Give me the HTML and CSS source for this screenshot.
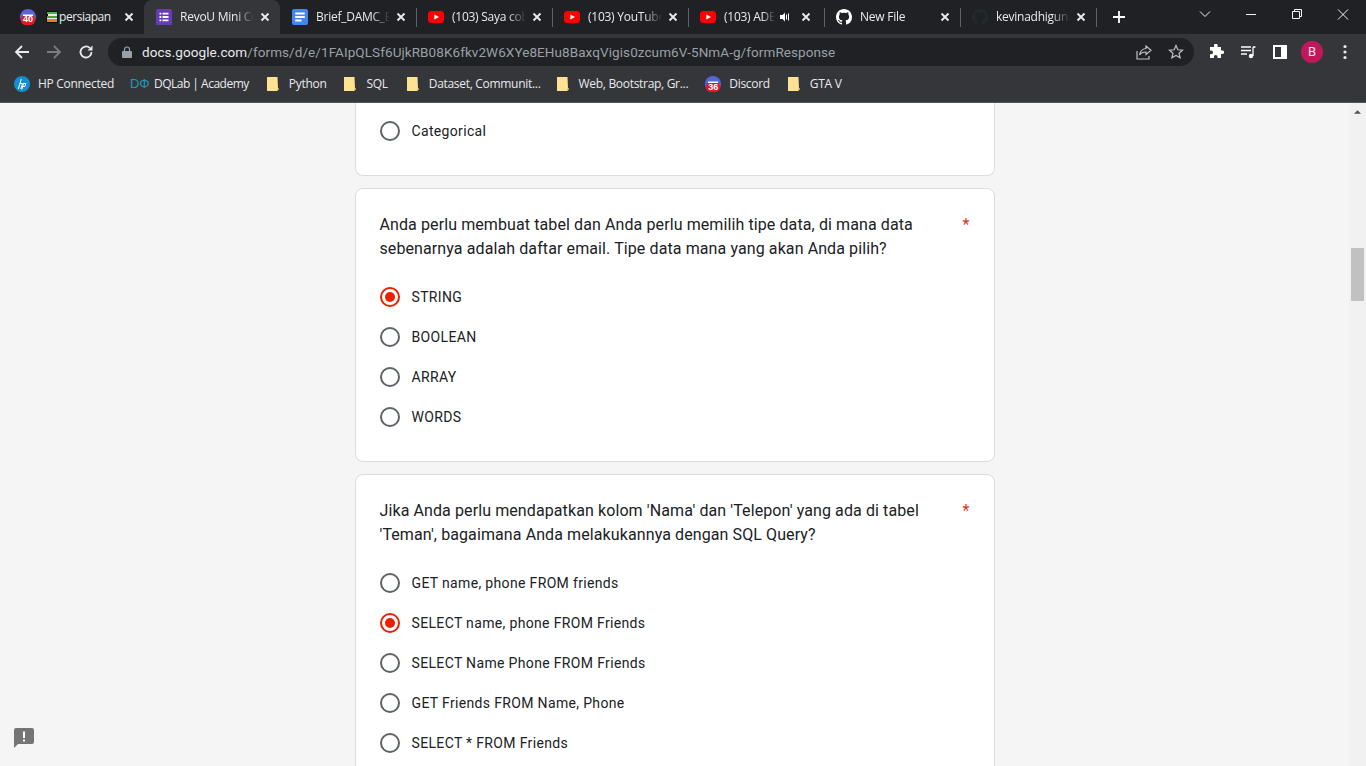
FILE: index.html
```html
<!DOCTYPE html>
<html lang="id">
<head>
<meta charset="utf-8">
<title>RevoU Mini Course</title>
<link rel="stylesheet" href="styles.css">
</head>
<body>
<header class="chrome">
  <div class="tabstrip">
    <div class="tab">
      <svg class="fav badge-fav" viewBox="0 0 16 16"><circle cx="8" cy="8" r="8" fill="#5865d8"/><rect x="1" y="6" width="14" height="10" rx="4.500" fill="#e01b24"/><rect x="3" y="5.500" width="10" height="1.500" fill="#fff"/></svg>
      <span class="fav-num">40</span>
      <svg class="fav2" viewBox="0 0 12 12"><rect width="12" height="12" fill="#111"/><rect x="1" y="1" width="10" height="2" fill="#4caf50"/><rect x="2" y="3" width="9" height="2" fill="#e8e8e8"/><rect x="1" y="5" width="10" height="2" fill="#43a047"/><rect x="1" y="7" width="10" height="1" fill="#e8e8e8"/><rect x="1" y="8" width="10" height="3" fill="#e67e22"/></svg>
      <span class="tab-title t-short">persiapan</span>
      <svg class="close" viewBox="0 0 10 10"><path d="M1.5 1.5l7 7M8.5 1.5l-7 7"/></svg>
    </div>
    <div class="tab active">
      <svg class="fav" viewBox="0 0 16 16"><rect width="16" height="16" rx="1.500" fill="#673ab7"/><path d="M3.500 3.800h1.800v1.800H3.500zM6.500 3.800h6v1.800h-6zM3.500 7.100h1.800v1.800H3.500zM6.500 7.100h6v1.800h-6zM3.500 10.400h1.800v1.800H3.500zM6.500 10.400h6v1.800h-6z" fill="#fff"/></svg>
      <span class="tab-title">RevoU Mini Course</span>
      <svg class="close" viewBox="0 0 10 10"><path d="M1.5 1.5l7 7M8.5 1.5l-7 7"/></svg>
    </div>
    <div class="tab sep">
      <svg class="fav" viewBox="0 0 16 16"><rect width="16" height="16" rx="2" fill="#4285f4"/><path d="M3.200 3.500h9.600v2H3.200zM3.200 7h9.600v2H3.200zM3.200 10.500h6.300v2H3.200z" fill="#fff"/></svg>
      <span class="tab-title">Brief_DAMC_Batch</span>
      <svg class="close" viewBox="0 0 10 10"><path d="M1.5 1.5l7 7M8.5 1.5l-7 7"/></svg>
    </div>
    <div class="tab sep">
      <svg class="fav" viewBox="0 0 16 12"><rect width="16" height="12" rx="3" fill="#f00"/><path d="M6.300 3.400L11 6l-4.700 2.600z" fill="#fff"/></svg>
      <span class="tab-title">(103) Saya coba</span>
      <svg class="close" viewBox="0 0 10 10"><path d="M1.5 1.5l7 7M8.5 1.5l-7 7"/></svg>
    </div>
    <div class="tab sep">
      <svg class="fav" viewBox="0 0 16 12"><rect width="16" height="12" rx="3" fill="#f00"/><path d="M6.300 3.400L11 6l-4.700 2.600z" fill="#fff"/></svg>
      <span class="tab-title">(103) YouTube</span>
      <svg class="close" viewBox="0 0 10 10"><path d="M1.5 1.5l7 7M8.5 1.5l-7 7"/></svg>
    </div>
    <div class="tab sep">
      <svg class="fav" viewBox="0 0 16 12"><rect width="16" height="12" rx="3" fill="#f00"/><path d="M6.300 3.400L11 6l-4.700 2.600z" fill="#fff"/></svg>
      <span class="tab-title t-audio">(103) ADELE</span>
      <svg class="audio" viewBox="0 0 12 12"><path d="M1 4h2.500L6 1.500v9L3.500 8H1z" fill="#fff"/><path d="M7.500 3.500v5M9.500 2.500v7" stroke="#fff" stroke-width="1" fill="none"/></svg>
      <svg class="close" viewBox="0 0 10 10"><path d="M1.5 1.5l7 7M8.5 1.5l-7 7"/></svg>
    </div>
    <div class="tab sep">
      <svg class="fav" viewBox="0 0 16 16"><path fill="#fff" d="M8 0C3.580 0 0 3.580 0 8c0 3.540 2.290 6.530 5.470 7.590.4.070.55-.17.55-.38 0-.19-.01-.82-.01-1.490-2.010.37-2.530-.49-2.690-.94-.09-.23-.48-.94-.82-1.130-.28-.15-.68-.52-.01-.53.63-.01 1.080.58 1.230.82.72 1.210 1.870.87 2.330.66.070-.52.280-.87.510-1.070-1.780-.2-3.640-.89-3.640-3.950 0-.87.310-1.590.820-2.150-.08-.2-.36-1.020.08-2.120 0 0 .67-.21 2.200.82.640-.18 1.320-.27 2-.27s1.360.09 2 .27c1.530-1.040 2.200-.82 2.200-.82.440 1.100.16 1.920.08 2.120.51.56.82 1.270.82 2.150 0 3.070-1.870 3.750-3.650 3.950.29.250.54.730.54 1.480 0 1.070-.01 1.930-.01 2.200 0 .21.150.46.550.38A8.013 8.013 0 0016 8c0-4.420-3.580-8-8-8z"/></svg>
      <span class="tab-title">New File</span>
      <svg class="close" viewBox="0 0 10 10"><path d="M1.5 1.5l7 7M8.5 1.5l-7 7"/></svg>
    </div>
    <div class="tab sep">
      <svg class="fav" viewBox="0 0 16 16"><path fill="#23292d" d="M8 0C3.580 0 0 3.580 0 8c0 3.540 2.290 6.530 5.470 7.590.4.070.55-.17.55-.38 0-.19-.01-.82-.01-1.490-2.010.37-2.530-.49-2.690-.94-.09-.23-.48-.94-.82-1.130-.28-.15-.68-.52-.01-.53.63-.01 1.080.58 1.230.82.72 1.210 1.870.87 2.330.66.070-.52.280-.87.510-1.070-1.780-.2-3.640-.89-3.640-3.950 0-.87.310-1.590.820-2.150-.08-.2-.36-1.020.08-2.120 0 0 .67-.21 2.200.82.640-.18 1.320-.27 2-.27s1.360.09 2 .27c1.530-1.040 2.200-.82 2.200-.82.440 1.100.16 1.920.08 2.120.51.56.82 1.270.82 2.150 0 3.070-1.870 3.750-3.650 3.950.29.250.54.730.54 1.480 0 1.070-.01 1.930-.01 2.200 0 .21.150.46.550.38A8.013 8.013 0 0016 8c0-4.420-3.580-8-8-8z"/></svg>
      <span class="tab-title">kevinadhigunawan</span>
      <svg class="close" viewBox="0 0 10 10"><path d="M1.5 1.5l7 7M8.5 1.5l-7 7"/></svg>
    </div>
    <svg class="newtab" viewBox="0 0 12 12"><path d="M6 0v12M0 6h12"/></svg>
    <div class="window-controls">
      <svg viewBox="0 0 46 30" class="wc"><path d="M18 11.500l5 5 5-5"/></svg>
      <svg viewBox="0 0 46 30" class="wc"><path d="M18 14.500h10"/></svg>
      <svg viewBox="0 0 46 30" class="wc"><path d="M18.500 11.500h7v7h-7zM20.500 11.500v-2h7v7h-2"/></svg>
      <svg viewBox="0 0 46 30" class="wc"><path d="M18 9.500l10 10M28 9.500l-10 10"/></svg>
    </div>
  </div>
  <div class="toolbar">
    <svg class="nav" viewBox="0 0 16 16"><path d="M15 8H2M8 2L2 8l6 6"/></svg>
    <svg class="nav dim" viewBox="0 0 16 16"><path d="M1 8h13M8 2l6 6-6 6"/></svg>
    <svg class="nav reload" viewBox="0 0 16 16"><path d="M13.500 8a5.500 5.500 0 1 1-1.600-3.900"/><path class="fill" d="M14.500 1.500v5h-5z"/></svg>
    <div class="omnibox">
      <svg class="lock" viewBox="0 0 10 12"><path d="M2.500 5V3.500a2.500 2.500 0 0 1 5 0V5" fill="none" stroke="#9aa0a6" stroke-width="1.200"/><rect y="5" width="10" height="7" rx="1" fill="#9aa0a6"/></svg>
      <span class="url"><span class="host">docs.google.com</span>/forms/d/e/1FAIpQLSf6UjkRB08K6fkv2W6XYe8EHu8BaxqVigis0zcum6V-5NmA-g/formResponse</span>
      <svg class="omni-ico" viewBox="0 0 16 16"><path d="M10 2l5 4.200-5 4.200V8C6.500 8 4.800 9 3.500 11 4 7.500 6 5 10 4.500zM1 7v8h12v-3"/></svg>
      <svg class="omni-ico star" viewBox="0 0 16 16"><path d="M8 1.500l1.900 4.300 4.600.4-3.500 3 1.100 4.600L8 11.400l-4.100 2.400 1.100-4.600-3.500-3 4.600-.4z"/></svg>
    </div>
    <svg class="tool" viewBox="0 0 16 16"><path fill="#fff" d="M6 1.500a1.800 1.800 0 0 1 3.600 0V3H13v3.500h1.300a1.800 1.800 0 0 1 0 3.600H13V14H9.500v-1.300a1.800 1.800 0 0 0-3.600 0V14H2V10.200h1.200a1.800 1.800 0 0 0 0-3.600H2V3h4z"/></svg>
    <svg class="tool" viewBox="0 0 16 16"><path d="M1 3h10M1 6.500h10M1 10h6" stroke="#fff" stroke-width="1.300" fill="none"/><path d="M13 3h2.500M13 3v9" stroke="#fff" stroke-width="1.300" fill="none"/><circle cx="11" cy="12" r="2.200" fill="#fff"/></svg>
    <svg class="tool" viewBox="0 0 16 16"><path fill="#fff" fill-rule="evenodd" d="M1 1h14v14H1zM3 3v10h6V3z"/></svg>
    <div class="avatar">B</div>
    <svg class="tool menu" viewBox="0 0 4 16"><circle cx="2" cy="2.500" r="1.600"/><circle cx="2" cy="8" r="1.600"/><circle cx="2" cy="13.500" r="1.600"/></svg>
  </div>
  <nav class="bookmarks">
    <div class="bm bm-hp"><svg class="bm-ico" viewBox="0 0 16 16"><circle cx="8" cy="8" r="8" fill="#0f90d2"/><path d="M7.300 3L4.300 13M6 7.500h2.500L6.800 13M9.500 7.500h2.300l-.9 3H9M9.500 7.500l-1.700 6" stroke="#fff" stroke-width="1" fill="none"/></svg><span>HP Connected</span></div>
    <div class="bm bm-dq"><span class="dq-logo">D&Phi;</span><span>DQLab | Academy</span></div>
    <div class="bm bm-wide"><svg class="bm-ico folder" viewBox="0 0 12 14"><path d="M0 0h10.500l.5 11.500h1V12l-2 2H0z" fill="#fde293"/><path d="M10 11.500h2L10 14z" fill="#f5c445"/></svg><span>Python</span></div>
    <div class="bm bm-wider"><svg class="bm-ico folder" viewBox="0 0 12 14"><path d="M0 0h10.500l.5 11.500h1V12l-2 2H0z" fill="#fde293"/><path d="M10 11.500h2L10 14z" fill="#f5c445"/></svg><span>SQL</span></div>
    <div class="bm bm-tight"><svg class="bm-ico folder" viewBox="0 0 12 14"><path d="M0 0h10.500l.5 11.500h1V12l-2 2H0z" fill="#fde293"/><path d="M10 11.500h2L10 14z" fill="#f5c445"/></svg><span>Dataset, Communit...</span></div>
    <div class="bm"><svg class="bm-ico folder" viewBox="0 0 12 14"><path d="M0 0h10.500l.5 11.500h1V12l-2 2H0z" fill="#fde293"/><path d="M10 11.500h2L10 14z" fill="#f5c445"/></svg><span>Web, Bootstrap, Gr...</span></div>
    <div class="bm bm-wide"><svg class="bm-ico" viewBox="0 0 16 16"><circle cx="8" cy="8" r="8" fill="#5865d8"/><rect x="1" y="6" width="14" height="10" rx="4.500" fill="#e01b24"/><rect x="3" y="5.500" width="10" height="1.500" fill="#fff"/></svg><span class="bm-num">36</span><span>Discord</span></div>
    <div class="bm"><svg class="bm-ico folder" viewBox="0 0 12 14"><path d="M0 0h10.500l.5 11.500h1V12l-2 2H0z" fill="#fde293"/><path d="M10 11.500h2L10 14z" fill="#f5c445"/></svg><span>GTA V</span></div>
  </nav>
</header>
<div class="viewport">
  <main class="form">
    <section class="card first">
      <label class="option"><span class="radio"></span>Categorical</label>
    </section>
    <section class="card">
      <div class="question"><p>Anda perlu membuat tabel dan Anda perlu memilih tipe data, di mana data sebenarnya adalah daftar email. Tipe data mana yang akan Anda pilih?</p><span class="req">*</span></div>
      <label class="option"><span class="radio on"></span>STRING</label>
      <label class="option"><span class="radio"></span>BOOLEAN</label>
      <label class="option"><span class="radio"></span>ARRAY</label>
      <label class="option"><span class="radio"></span>WORDS</label>
    </section>
    <section class="card">
      <div class="question"><p>Jika Anda perlu mendapatkan kolom 'Nama' dan 'Telepon' yang ada di tabel 'Teman', bagaimana Anda melakukannya dengan SQL Query?</p><span class="req">*</span></div>
      <label class="option"><span class="radio"></span>GET name, phone FROM friends</label>
      <label class="option"><span class="radio on"></span>SELECT name, phone FROM Friends</label>
      <label class="option"><span class="radio"></span>SELECT Name Phone FROM Friends</label>
      <label class="option"><span class="radio"></span>GET Friends FROM Name, Phone</label>
      <label class="option"><span class="radio"></span>SELECT * FROM Friends</label>
    </section>
  </main>
  <div class="scrollbar">
    <svg class="sb-arrow" viewBox="0 0 8 4"><path d="M0 4l4-4 4 4z"/></svg>
    <div class="sb-thumb"></div>
  </div>
  <svg class="feedback" viewBox="0 0 20 20"><path fill="#757575" d="M2 0h16a2 2 0 0 1 2 2v12a2 2 0 0 1-2 2H4l-4 4V2a2 2 0 0 1 2-2z"/><path fill="#fff" d="M9 3.500h2v6.500H9zM9 11.500h2v2H9z"/></svg>
</div>
</body>
</html>
```
FILE: styles.css
```css
* { box-sizing: border-box; }
html, body { margin: 0; height: 100%; overflow: hidden; }
body { display: flex; flex-direction: column; width: 1366px; height: 766px; font-family: Roboto, "Liberation Sans", sans-serif; background: #f5f5f5; }

.chrome { flex: none; background: #35363a; }
.tabstrip { height: 34px; background: #202124; display: flex; padding-left: 8px; position: relative; }
.tab { width: 136px; height: 34px; display: flex; align-items: center; padding: 0 8px 0 12px; position: relative; color: #e8eaed; font: 12px/16px "Open Sans", "Liberation Sans", sans-serif; letter-spacing: -.25px; }
.tab.active { background: #35363a; border-radius: 8px 8px 0 0; }
.tab.sep::after { content: ""; position: absolute; right: -1px; top: 8px; height: 19px; width: 1px; background: #5f6368; }
.fav { flex: none; width: 16px; height: 16px; margin-right: 8px; }
.badge-fav { margin-right: 10px; }
.fav-num { position: absolute; left: 13px; top: 13px; width: 14px; text-align: center; color: #fff; font: 700 9px/12px "Liberation Sans", sans-serif; letter-spacing: 0; }
.fav2 { flex: none; width: 12px; height: 12px; margin-right: 1px; }
.tab-title { flex: 1; min-width: 0; white-space: nowrap; overflow: hidden; -webkit-mask-image: linear-gradient(to right, #000 75%, transparent); mask-image: linear-gradient(to right, #000 75%, transparent); }
.t-short { letter-spacing: -.45px; -webkit-mask-image: none; mask-image: none; }
.close { flex: none; width: 10px; height: 10px; margin: 0 2px 0 6px; fill: none; stroke: #e8eaed; stroke-width: 1.900; }
.audio { flex: none; width: 12px; height: 12px; margin-left: 4px; margin-right: 4px; }
.t-audio { flex: 0 0 51px; }
.newtab { flex: none; width: 12px; height: 12px; margin: 11px 0 0 17px; fill: none; stroke: #fff; stroke-width: 1.800; }
.window-controls { margin-left: auto; display: flex; height: 30px; }
.wc { width: 46px; height: 30px; fill: none; stroke: #f1f3f4; stroke-width: 1; }

.toolbar { height: 35px; display: flex; align-items: center; padding: 1px 0 0 14px; }
.nav { flex: none; width: 16px; height: 16px; margin-right: 16px; fill: none; stroke: #e8eaed; stroke-width: 1.800; }
.nav.dim { stroke: #7b7d80; }
.nav.reload { margin-right: 14px; }
.nav .fill { fill: #e8eaed; stroke: none; }
.omnibox { flex: none; width: 1086px; height: 28px; background: #202124; border-radius: 14px; display: flex; align-items: center; padding-left: 14px; }
.lock { flex: none; width: 10px; height: 12px; margin-right: 10px; }
.url { flex: 1; font: 13.500px/20px Roboto, "Liberation Sans", sans-serif; color: #9aa0a6; white-space: nowrap; letter-spacing: .08px; }
.host { color: #e8eaed; }
.omni-ico { flex: none; width: 16px; height: 16px; margin-right: 16px; fill: none; stroke: #bdc1c6; stroke-width: 1.200; }
.omni-ico.star { margin-right: 10px; }
.tool { flex: none; width: 16px; height: 16px; margin-left: 16px; }
.omnibox + .tool { margin-left: 14px; }
.avatar { flex: none; width: 22px; height: 22px; border-radius: 50%; margin-left: 13px; background: #c2185b; color: #fce4ec; font: 13px/22px Roboto, sans-serif; text-align: center; }
.menu { width: 4px; margin-left: 20px; fill: #e8eaed; }

.bookmarks { height: 34px; display: flex; align-items: center; padding: 0 0 3px 14px; border-bottom: 1px solid #55565a; }
.bm { display: flex; align-items: center; position: relative; margin-right: 17px; color: #e8eaed; font: 12px/16px "Open Sans", "Liberation Sans", sans-serif; letter-spacing: -.3px; white-space: nowrap; }
.bm-hp { margin-right: 16px; }
.bm-dq { letter-spacing: -.5px; margin-right: 18px; }
.bm-wide { margin-right: 18px; }
.bm-wider { margin-right: 19px; }
.bm-tight { margin-right: 16px; }
.bm-ico { flex: none; width: 16px; height: 16px; margin-right: 8px; }
.bm-ico.folder { width: 12px; height: 14px; margin-right: 10px; }
.bm-num { position: absolute; left: 1px; top: 5px; width: 14px; text-align: center; color: #fff; font: 700 9px/12px "Liberation Sans", sans-serif; letter-spacing: 0; }
.dq-logo { width: 16px; margin-right: 8px; color: #1d9bb0; font: 13px/16px "Liberation Sans", sans-serif; letter-spacing: 0; white-space: nowrap; }

.viewport { flex: 1; min-height: 0; display: flex; position: relative; overflow: hidden; }
.form { flex: 1; min-width: 0; display: flex; flex-direction: column; align-items: center; gap: 12px; }
.card { flex: none; width: 640px; background: #fff; border: 1px solid #dadce0; border-radius: 8px; padding: 24px 24px 0; }
.card.first { height: 73px; padding-top: 8px; border-top: 0; border-radius: 0 0 8px 8px; }
.card:nth-child(2) { height: 274px; }
.card:nth-child(3) { height: 400px; }
.question { display: flex; justify-content: space-between; margin-bottom: 16px; color: #202124; font-size: 16px; line-height: 24px; letter-spacing: .1px; }
.question p { margin: 0; width: 550px; }
.req { color: #d93025; }
.option { display: flex; align-items: center; height: 40px; color: #202124; font-size: 14px; line-height: 20px; letter-spacing: .34px; }
.radio { flex: none; width: 20px; height: 20px; margin-right: 12px; border: 2px solid #5f6368; border-radius: 50%; display: flex; align-items: center; justify-content: center; }
.radio.on { border-color: #ec2000; }
.radio.on::after { content: ""; width: 10px; height: 10px; border-radius: 50%; background: #ec2000; }

.scrollbar { flex: none; width: 17px; background: #f1f1f1; position: relative; }
.sb-arrow { position: absolute; left: 5px; top: 7px; width: 7px; height: 4px; fill: #505050; }
.sb-thumb { position: absolute; left: 2px; top: 145px; width: 13px; height: 53px; background: #c1c1c1; }
.feedback { position: absolute; left: 14px; top: 625px; width: 20px; height: 20px; }
```
